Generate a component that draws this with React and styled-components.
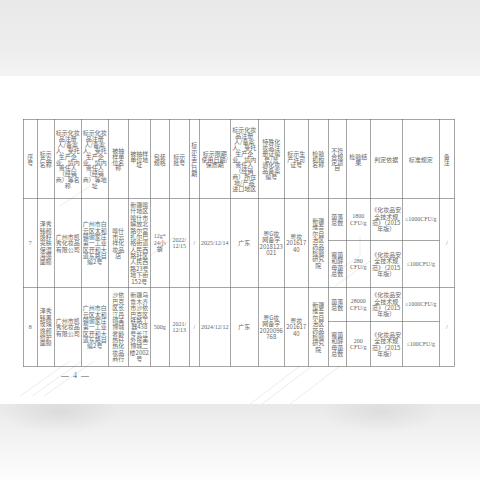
import React from 'react';
import styled, { createGlobalStyle } from 'styled-components';

// The scan's text is about 6px; the table is laid out at 2x and scaled down
// so the browser's minimum font size doesn't distort it.
const S = 2;

const GlobalStyle = createGlobalStyle`
  html, body {
    margin: 0;
    padding: 0;
    background: #fff;
  }
  body {
    font-family: "Noto Sans CJK SC", "Liberation Serif", serif;
  }
`;

const Screen = styled.div`
  width: 480px;
  height: 480px;
  display: flex;
  flex-direction: column;
  overflow: hidden;
`;

const TopBand = styled.div`
  height: 76px;
  flex: none;
  background: linear-gradient(180deg, #e9e9e9 0%, #eeeeee 70%, #f4f4f4 100%);
`;

const Page = styled.div`
  position: relative;
  height: 328px;
  flex: none;
  background: #fff;
  padding: 43px 0 0 23px;
  box-sizing: border-box;
`;

const BottomBand = styled.div`
  flex: 1;
  background:
    radial-gradient(ellipse 60px 22px at 60px 8px, rgba(0, 0, 0, 0.07), transparent),
    radial-gradient(ellipse 60px 22px at 380px 8px, rgba(0, 0, 0, 0.06), transparent),
    linear-gradient(180deg, #e9e9e9 0%, #f3f3f3 45%, #fdfdfd 100%);
`;

const Watermark = styled.svg`
  position: absolute;
  left: 0;
  top: 0;
  width: 480px;
  height: 328px;
  pointer-events: none;
`;

const SheetFrame = styled.div`
  position: relative;
  width: 432px;
  height: 248px;
`;

const Sheet = styled.table`
  table-layout: fixed;
  border-collapse: collapse;
  width: ${431 * S}px;
  color: #666;
  font-size: ${6 * S}px;
  line-height: ${6.4 * S}px;
  transform: scale(${1 / S});
  transform-origin: 0 0;
`;

const Cell = styled.td`
  border: ${0.8 * S}px solid #4a4a4a;
  padding: 0 ${p => (p.$pad != null ? p.$pad : 1) * S}px;
  text-align: center;
  vertical-align: middle;
  word-break: break-all;
  overflow: hidden;
  white-space: ${p => (p.$nowrap ? 'nowrap' : 'normal')};
  font-family: ${p => (p.$latin ? '"Liberation Serif", "Noto Sans CJK SC", serif' : '"Noto Sans CJK SC", sans-serif')};
  height: ${p => (p.$h ? `${p.$h * S}px` : 'auto')};
  box-sizing: border-box;
`;

const HeadCell = styled(Cell).attrs({ as: 'th' })`
  font-weight: normal;
  line-height: ${5.9 * S}px;
`;

const PageNo = styled.div`
  margin: 4px 0 0 38px;
  font-family: "Liberation Serif", serif;
  font-size: 8px;
  color: #555;
  letter-spacing: 1px;
`;

const widths = [14, 17, 27, 27, 20, 22, 19, 20, 10, 31, 28, 26, 24, 20, 18, 24, 32, 37, 15];

const headers = [
  '序号',
  '标示产品名称',
  '标示化妆品注册人/备案人、受托生产企业、境内责任人（经销商）等名称',
  '标示化妆品注册人/备案人、受托生产企业、境内责任人（经销商）等地址',
  '被抽样单位名称',
  '被抽样单位地址',
  '包装规格',
  '标示批号',
  '标示生产日期',
  '标示限期使用日期/保质期',
  '标示化妆品注册人/备案人、受托生产企业、境内责任人（经销商）所在地/产品进口地区',
  '特殊化妆品注册证编号/普通化妆品备案编号',
  '标示生产许可证号',
  '检验机构名称',
  '不符合规定项目',
  '检验结果',
  '判定依据',
  '标准规定',
  '备注',
];

// extra side padding so header words wrap like the scan
const headerPad = { 0: 2, 1: 1.5, 2: 1, 3: 1, 4: 3, 5: 1.5, 6: 2, 7: 3, 9: 2, 10: 1.5, 11: 3.5, 12: 2, 13: 3, 14: 2, 15: 1.5, 18: 3 };

const rows = [
  {
    no: '7',
    name: '泽秀臻颜焕籽亮肤保湿海藻面膜',
    owner: '广州市凯秀化妆品有限公司',
    addr: '广州市白云区太和镇谢家庄第一工业区开和大道东路自编2号',
    shop: '喀什市云祥化妆品店',
    shopAddr: '新疆喀什地区喀什市解放北路尔宫扎尔巴格街道人民西路社区人民西路23号地下街152号',
    spec: ['12g*', '24小', '袋'],
    batch: ['2022/', '12/15'],
    expiry: '2025/12/14',
    region: '广东',
    record: ['粤G妆', '网备字', '2018123', '021'],
    licence: ['粤妆', '201617', '40'],
    lab: '新疆维吾尔自治区药品检验研究院',
    heights: [42, 47],
    results: [
      ['菌落总数', ['1800', 'CFU/g'], '≤1000CFU/g'],
      ['霉菌和酵母菌总数', ['280', 'CFU/g'], '≤100CFU/g'],
    ],
  },
  {
    no: '8',
    name: '泽秀臻黑玫瑰焕颜修护面膜',
    owner: '广州市凯秀化妆品有限公司',
    addr: '广州市白云区太和镇谢家庄第一工业区开和大道东路自编2号',
    shop: '沙依巴克区长江丹翊美博城奢龄热钎热化妆品商行',
    shopAddr: '新疆乌鲁木齐市沙依巴克区铁路工器438号长江外贸美博城二楼2002号',
    spec: ['500g'],
    batch: ['2021/', '12/13'],
    expiry: '2024/12/12',
    region: '广东',
    record: ['粤G妆', '网备字', '2020096', '768'],
    licence: ['粤妆', '201617', '40'],
    lab: '新疆维吾尔自治区药品检验研究院',
    heights: [34, 45],
    results: [
      ['菌落总数', ['28000', 'CFU/g'], '≤1000CFU/g'],
      ['霉菌和酵母菌总数', ['200', 'CFU/g'], '≤100CFU/g'],
    ],
  },
];

const Lines = ({ lines }) =>
  lines.map((l, i) => (
    <React.Fragment key={i}>
      {i > 0 && <br />}
      {l}
    </React.Fragment>
  ));

const NORM = ['《化妆品安', '全技术规', '范》（2015', '年版）'];

function SampleRows({ row }) {
  const [first, second] = row.results;
  return (
    <>
      <tr>
        <Cell rowSpan={2} $latin>{row.no}</Cell>
        <Cell rowSpan={2} $pad={1.5}>{row.name}</Cell>
        <Cell rowSpan={2} $pad={0.5}>{row.owner}</Cell>
        <Cell rowSpan={2} $pad={0.5}>{row.addr}</Cell>
        <Cell rowSpan={2} $pad={2}>{row.shop}</Cell>
        <Cell rowSpan={2} $pad={1}>{row.shopAddr}</Cell>
        <Cell rowSpan={2} $latin><Lines lines={row.spec} /></Cell>
        <Cell rowSpan={2} $latin><Lines lines={row.batch} /></Cell>
        <Cell rowSpan={2} $latin>/</Cell>
        <Cell rowSpan={2} $latin $nowrap>{row.expiry}</Cell>
        <Cell rowSpan={2}>{row.region}</Cell>
        <Cell rowSpan={2} $pad={0}><Lines lines={row.record} /></Cell>
        <Cell rowSpan={2} $pad={0}><Lines lines={row.licence} /></Cell>
        <Cell rowSpan={2} $pad={3}>{row.lab}</Cell>
        <Cell $h={row.heights[0]} $pad={2}>{first[0]}</Cell>
        <Cell $latin><Lines lines={first[1]} /></Cell>
        <Cell $pad={0} $nowrap><Lines lines={NORM} /></Cell>
        <Cell $latin $nowrap $pad={0}>{first[2]}</Cell>
        <Cell rowSpan={2} $latin>/</Cell>
      </tr>
      <tr>
        <Cell $h={row.heights[1]} $pad={2}>{second[0]}</Cell>
        <Cell $latin><Lines lines={second[1]} /></Cell>
        <Cell $pad={0} $nowrap><Lines lines={NORM} /></Cell>
        <Cell $latin $nowrap $pad={0}>{second[2]}</Cell>
      </tr>
    </>
  );
}

export default function App() {
  return (
    <Screen>
      <GlobalStyle />
      <TopBand />
      <Page>
        <Watermark viewBox="0 0 480 328">
          <g stroke="#ececec" strokeWidth="1" fill="none">
            <path d="M20 320 L70 285 M32 320 L82 285 M44 320 L94 285" />
            <path d="M250 328 L300 290 M262 328 L312 290 M290 328 L340 290" />
            <path d="M330 200 L360 180 L360 160 M335 210 L370 185" />
            <path d="M60 130 L90 110 M150 180 L175 160" />
          </g>
        </Watermark>
        <SheetFrame>
          <Sheet>
            <colgroup>
              {widths.map((w, i) => (
                <col key={i} style={{ width: w * S }} />
              ))}
            </colgroup>
            <thead>
              <tr>
                {headers.map((h, i) => (
                  <HeadCell key={i} $h={i === 0 ? 79 : undefined} $pad={headerPad[i] != null ? headerPad[i] : 1}>
                    {h}
                  </HeadCell>
                ))}
              </tr>
            </thead>
            <tbody>
              {rows.map(r => (
                <SampleRows key={r.no} row={r} />
              ))}
            </tbody>
          </Sheet>
        </SheetFrame>
        <PageNo>— 4 —</PageNo>
      </Page>
      <BottomBand />
    </Screen>
  );
}
